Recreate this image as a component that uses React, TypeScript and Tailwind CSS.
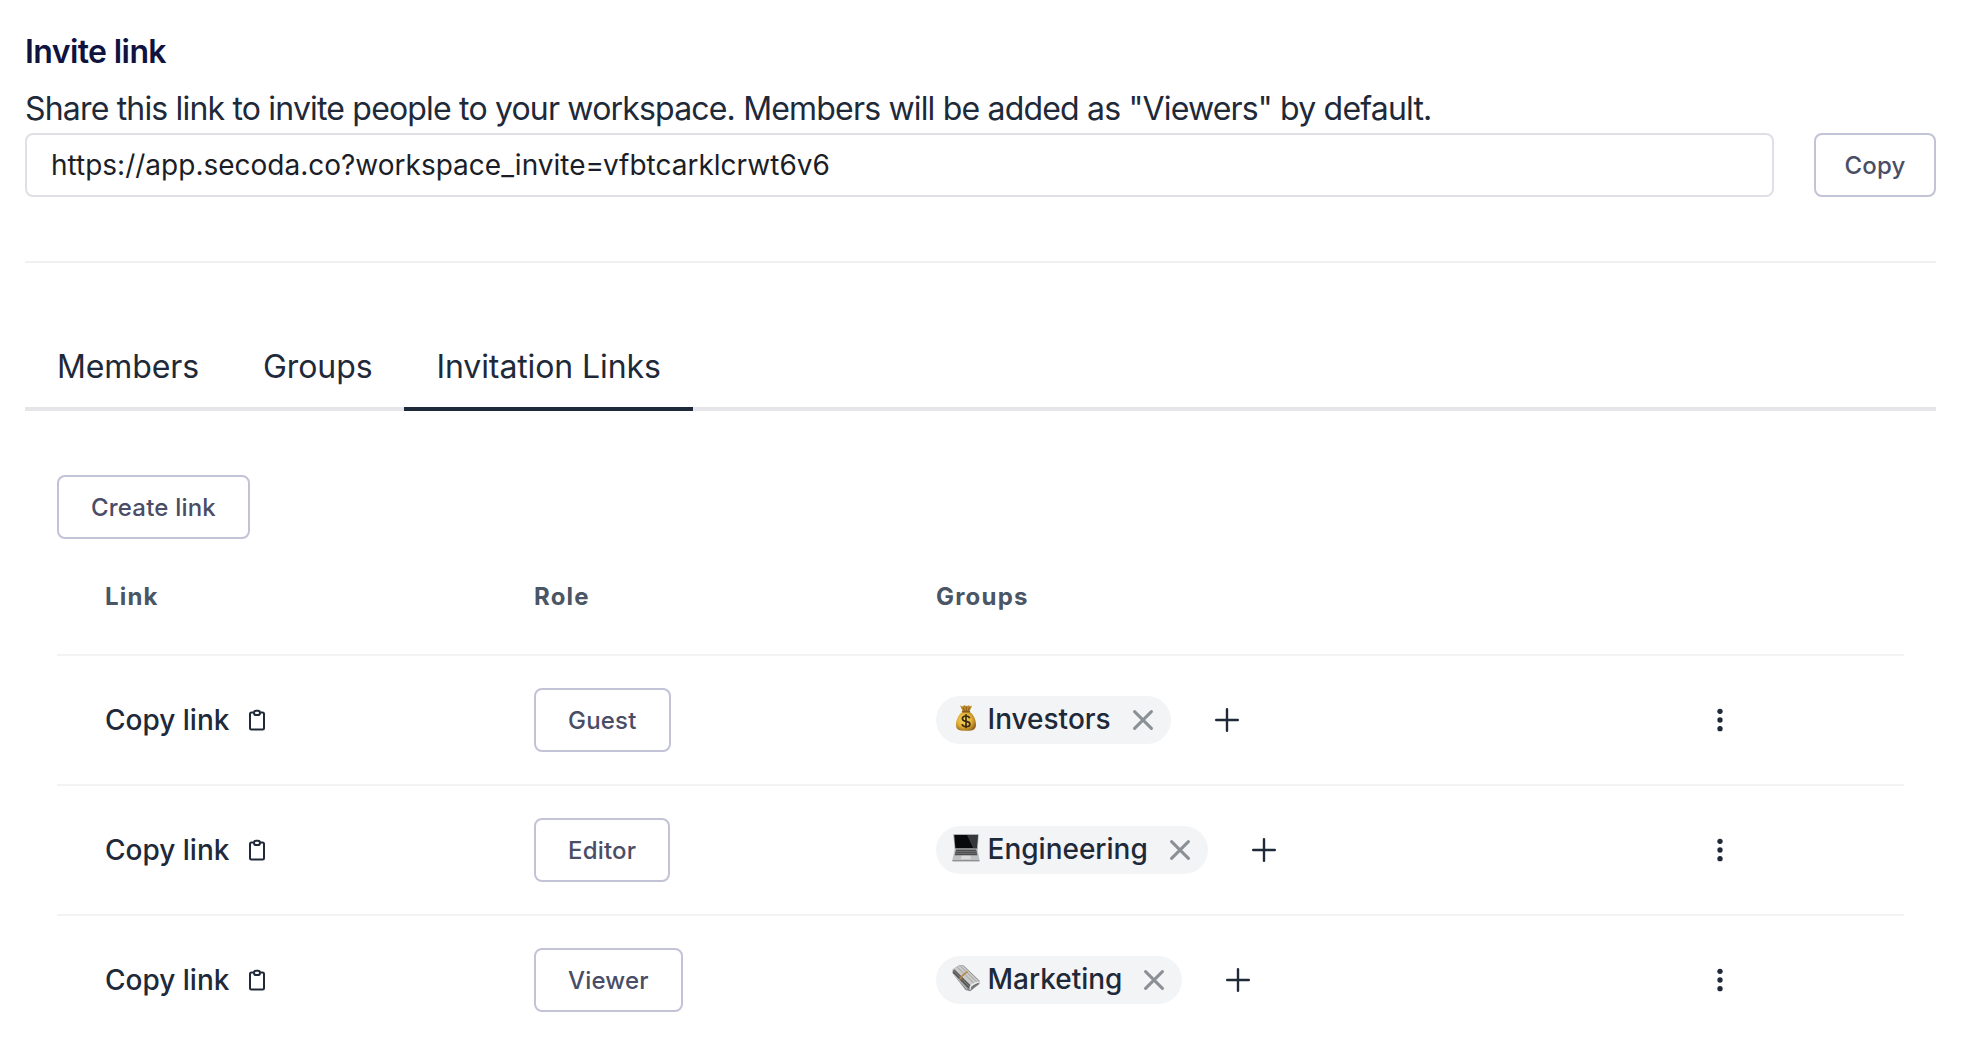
import type { ReactNode } from "react";

function ClipboardIcon() {
  return (
    <svg width="20" height="24" viewBox="0 0 20 24" fill="none" stroke="#1f2937" strokeWidth="2">
      <path d="M6.500 4.500H4.500A1.500 1.500 0 0 0 3 6v14a1.500 1.500 0 0 0 1.500 1.500h11A1.500 1.500 0 0 0 17 20V6a1.500 1.500 0 0 0-1.500-1.500h-2" />
      <rect x="7" y="2.800" width="6" height="4.200" rx="2.100" />
    </svg>
  );
}

function CloseIcon() {
  return (
    <svg width="20" height="20" viewBox="0 0 20 20" fill="none" stroke="#8b9097" strokeWidth="3" strokeLinecap="round">
      <path d="M1.600 1.600l16.800 16.800M18.400 1.600L1.600 18.400" />
    </svg>
  );
}

function PlusIcon() {
  return (
    <svg width="24" height="24" viewBox="0 0 24 24" fill="none" stroke="#1f2937" strokeWidth="2.4" strokeLinecap="round">
      <path d="M12 1.2v21.6M1.2 12h21.6" />
    </svg>
  );
}

function DotsIcon() {
  return (
    <svg width="24" height="24" viewBox="0 0 24 24" fill="#1f2937">
      <circle cx="12" cy="3.3" r="2.65" />
      <circle cx="12" cy="12" r="2.65" />
      <circle cx="12" cy="20.7" r="2.65" />
    </svg>
  );
}

function MoneyBag() {
  return (
    <svg width="28" height="28" viewBox="0 0 28 28">
      <defs>
        <radialGradient id="bag" cx="0.42" cy="0.45" r="0.62">
          <stop offset="0" stopColor="#fbdc63" />
          <stop offset="0.6" stopColor="#e0ae35" />
          <stop offset="1" stopColor="#96661a" />
        </radialGradient>
      </defs>
      <path d="M8 1.6l2.5.9 2-1.4 2 1.2 2.2-1.1 1.2 1.1 2.2-.5-3 6.4h-6z" fill="#c08d2c" />
      <path d="M11 3l1.8 4.6M14.3 2.6v5M17.6 3l-1.9 4.6" stroke="#80541a" strokeWidth="0.8" fill="none" />
      <path d="M11 7.4c-3.5 2.2-6.9 7-7 13.2 0 4.2 2.2 5.6 5 5.8 3.2.3 7.2.3 10.2 0 2.8-.2 4.900-1.700 4.800-5.800-.2-6.300-3.300-11-6.800-13.200z" fill="url(#bag)" />
      <path d="M10.600 7.600h6.800" stroke="#8b5d1c" strokeWidth="1.600" strokeLinecap="round" />
      <path d="M17.700 14.200c-.5-1.500-1.900-2.200-3.700-2.200-2.100 0-3.600 1-3.600 2.700 0 3.800 7.500 1.600 7.500 5.300 0 1.800-1.700 2.700-3.800 2.700-2.100 0-3.600-.9-4-2.600M14 10.300v14" stroke="#3d2c12" strokeWidth="1.700" fill="none" />
    </svg>
  );
}

function Laptop() {
  return (
    <svg width="28" height="28" viewBox="0 0 28 28">
      <path d="M1.300.2h25.300l-1 15.600H2.800z" fill="#96989a" />
      <path d="M2.300 1h23.300l-.8 13.200H3.400z" fill="#08090a" />
      <path d="M15 1h10.600l-.8 13.200h-3.600z" fill="#35383a" />
      <path d="M2.800 14.800h22.600l2.100 11H.4z" fill="#bfc0c1" />
      <path d="M4 15.600h20.200l1.200 5.600H2.700z" fill="#4a4b4d" />
      <path d="M3.600 17.400h21M3.200 19.300h21.700" stroke="#85878a" strokeWidth="0.6" />
      <path d="M9.600 21.800h8.800l.6 3.400H9z" fill="#d9dada" />
      <path d="M.4 25.800h27.100v1.600H.4z" fill="#8f9092" />
    </svg>
  );
}

function Newspaper() {
  return (
    <svg width="28" height="28" viewBox="0 0 28 28">
      <path d="M.6 5.400L7.500 1l4.200.6 15.600 14.800.2 3.600-9.300 7.300-4.600-1.300L.8 9.800z" fill="#858586" />
      <path d="M1 5.300L7.600 1.300l3.700.6 15.500 15-7.500 5.600z" fill="#cbcbca" />
      <path d="M5.400 3.200l17.200 16.700M8.500 2.200l16.400 15.900" stroke="#a3a3a2" strokeWidth="1" />
      <path d="M1 7.800l16.800 16.700M2.200 5.800l17 17" stroke="#505052" strokeWidth="1.200" />
      <path d="M1 9.700l14.200 15.400" stroke="#d5d5d4" strokeWidth="0.900" />
      <path d="M18.200 25.600c-.4-2.400 1-4.600 3.600-5.700 2.600-1.100 4.600-1.700 5.200-2" stroke="#f0f0ef" strokeWidth="1.300" fill="none" />
      <path d="M19.600 25c.6-1.700 2-3 3.900-3.800l2.600-1.500" stroke="#6b6b6c" strokeWidth="1" fill="none" />
      <path d="M7.500 15.800c1.200-3.300 3.900-5.600 8.100-8.200" stroke="#b58a43" strokeWidth="1.700" fill="none" />
    </svg>
  );
}

const buttonClass =
  "flex h-16 items-center justify-center rounded-lg border-2 border-[#c3c3d8] bg-white pt-0.5 text-2xl font-medium tracking-[0.2px] text-[#494d66]";

const tabs = ["Members", "Groups", "Invitation Links"];

const rows: { role: string; group: string; emoji: ReactNode }[] = [
  { role: "Guest", group: "Investors", emoji: <MoneyBag /> },
  { role: "Editor", group: "Engineering", emoji: <Laptop /> },
  { role: "Viewer", group: "Marketing", emoji: <Newspaper /> },
];

const gridClass = "grid grid-cols-[429px_402px_766px_1fr] items-center pl-12";

export default function App() {
  return (
    <div className="h-[1044px] overflow-hidden bg-white pr-9 pl-[25px] pt-8 font-['Inter',sans-serif] text-gray-800">
      <h2 className="text-[32px] leading-10 font-semibold tracking-[-0.6px] text-[#10133f]">Invite link</h2>
      <p className="mt-[13px] text-[32px] leading-[47px] tracking-[-0.82px]">
        Share this link to invite people to your workspace. Members will be added as "Viewers" by default.
      </p>
      <div className="mt-px flex gap-10">
        <div className="flex h-16 flex-1 items-center rounded-lg border-2 border-[#dfdfe6] px-6 text-[28px] text-[#1b1e27]">
          https://app.secoda.co?workspace_invite=vfbtcarklcrwt6v6
        </div>
        <button className={`${buttonClass} w-[122px]`}>Copy</button>
      </div>
      <div className="mt-16 h-0.5 bg-[#f0f0f1]" />

      <nav className="mt-[79px] flex h-[69px] border-b-4 border-[#e5e5ea] text-[32px] leading-[50px] tracking-[-0.1px]">
        {tabs.map((tab) => (
          <div
            key={tab}
            className={`h-[69px] border-b-4 px-8 ${tab === "Invitation Links" ? "border-gray-800" : "border-transparent"}`}
          >
            {tab}
          </div>
        ))}
      </nav>

      <div className="mx-8 mt-16">
        <button className={`${buttonClass} px-8`}>Create link</button>
        <div className={`${gridClass} pt-10 pb-[39px] text-2xl leading-9 font-bold tracking-[1.2px] text-gray-600`}>
          <div>Link</div>
          <div>Role</div>
          <div>Groups</div>
        </div>
        {rows.map((row) => (
          <div key={row.role} className={`${gridClass} h-[130px] border-t-2 border-[#f3f3f4] text-[28px] font-medium`}>
            <div className="flex items-center gap-[18px]">
              Copy link
              <ClipboardIcon />
            </div>
            <div className="flex">
              <button className={`${buttonClass} px-8`}>{row.role}</button>
            </div>
            <div className="flex items-center gap-11">
              <div className="flex h-12 items-center rounded-full bg-gray-100 pr-[18px] pl-4">
                <span className="-mt-1">{row.emoji}</span>
                <span className="mr-[22px] ml-[7.5px] pb-0.5">{row.group}</span>
                <CloseIcon />
              </div>
              <PlusIcon />
            </div>
            <div className="pl-[6px]">
              <DotsIcon />
            </div>
          </div>
        ))}
      </div>
    </div>
  );
}
